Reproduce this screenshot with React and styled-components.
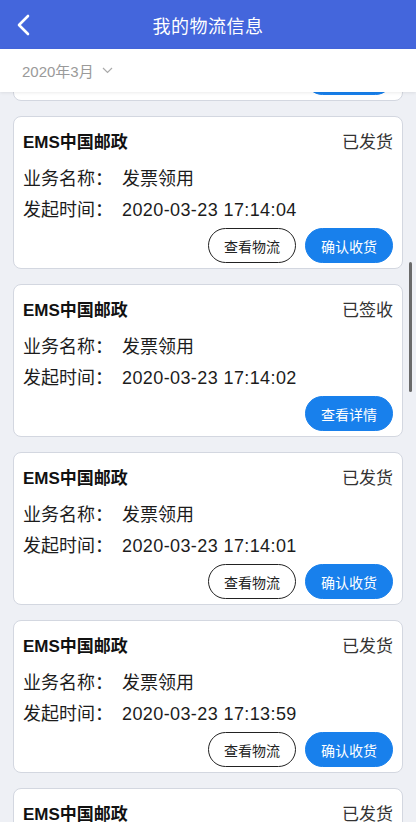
import React, {useLayoutEffect, useRef} from 'react'
import styled, {createGlobalStyle} from 'styled-components'

const GlobalStyle = createGlobalStyle`
    html, body {
        margin: 0;
        padding: 0;
        background: #eef0f5;
    }
    * {
        box-sizing: border-box;
    }
`

const Page = styled.main`
    width: 416px;
    height: 822px;
    display: flex;
    flex-direction: column;
    background: #eef0f5;
    font-family: "Liberation Sans", "Noto Sans CJK SC", sans-serif;
    overflow: hidden;
`

const Header = styled.header`
    height: 49px;
    flex: none;
    background: #4466dc;
    display: flex;
    align-items: center;
    justify-content: center;
    position: relative;
    color: #fff;
    font-size: 18px;
    letter-spacing: 0.5px;
`

const BackButton = styled.button`
    position: absolute;
    left: 10px;
    top: 11px;
    width: 28px;
    height: 28px;
    padding: 0;
    border: 0;
    background: none;
    display: flex;
    align-items: center;
    justify-content: center;
`

const FilterBar = styled.div`
    height: 43px;
    flex: none;
    background: #fff;
    display: flex;
    align-items: center;
    padding: 0 22px 1px;
    color: #9a9a9a;
    font-size: 15px;
    gap: 8px;
    box-shadow: 0 1px 3px rgba(0, 0, 0, 0.08);
    position: relative;
    z-index: 1;
`

const ListWrap = styled.div`
    flex: 1;
    position: relative;
    min-height: 0;
`

const List = styled.div`
    height: 100%;
    overflow-y: auto;
    padding: 15px 13px;
    display: flex;
    flex-direction: column;
    gap: 15px;
    scrollbar-width: none;
    &::-webkit-scrollbar {
        display: none;
    }
`

const ScrollThumb = styled.div`
    position: absolute;
    right: 4px;
    top: 170px;
    width: 3px;
    height: 130px;
    border-radius: 2px;
    background: #6a6a6a;
`

const Card = styled.section`
    flex: none;
    background: #fff;
    border: 1px solid #d3d7e0;
    border-radius: 8px;
    padding: 11px 9px 5px;
    display: flex;
    flex-direction: column;
`

const CardHead = styled.div`
    height: 24px;
    display: flex;
    align-items: center;
    justify-content: space-between;
    margin-bottom: 10px;
`

const Company = styled.div`
    font-size: 17px;
    font-weight: 700;
    color: #111;
`

const Status = styled.div`
    font-size: 17px;
    color: #333;
`

const Row = styled.div`
    height: 31px;
    padding-top: 2px;
    line-height: 31px;
    font-size: 18px;
    color: #1c1c1c;
    white-space: nowrap;
`

const Label = styled.span`
    display: inline-block;
    width: 99px;
`

const Value = styled.span`
    letter-spacing: ${p => (p.numeric ? '0.4px' : '0')};
`

const Actions = styled.div`
    margin-top: 4px;
    display: flex;
    justify-content: flex-end;
    gap: 9px;
`

const Button = styled.button`
    height: 35px;
    width: 88px;
    border-radius: 18px;
    font-family: inherit;
    font-size: 14px;
    padding: 0;
    cursor: pointer;
    border: 1px solid ${p => (p.primary ? '#1880ec' : '#222')};
    background: ${p => (p.primary ? '#1880ec' : '#fff')};
    color: ${p => (p.primary ? '#fff' : '#222')};
`

const orders = [
    {status: '已签收', time: '2020-03-23 17:14:06'},
    {status: '已发货', time: '2020-03-23 17:14:04'},
    {status: '已签收', time: '2020-03-23 17:14:02'},
    {status: '已发货', time: '2020-03-23 17:14:01'},
    {status: '已发货', time: '2020-03-23 17:13:59'},
    {status: '已发货', time: '2020-03-23 17:13:57'},
]

const OrderCard = ({status, time}) => (
    <Card>
        <CardHead>
            <Company>EMS中国邮政</Company>
            <Status>{status}</Status>
        </CardHead>
        <Row><Label>业务名称：</Label><Value>发票领用</Value></Row>
        <Row><Label>发起时间：</Label><Value numeric>{time}</Value></Row>
        <Actions>
            {status === '已签收' ? (
                <Button primary>查看详情</Button>
            ) : (
                <>
                    <Button>查看物流</Button>
                    <Button primary>确认收货</Button>
                </>
            )}
        </Actions>
    </Card>
)

const App = () => {
    const listRef = useRef(null)

    // the screen shows the list already scrolled a bit
    useLayoutEffect(() => {
        if (listRef.current) listRef.current.scrollTop = 159
    }, [])

    return (
        <Page>
            <GlobalStyle />
            <Header>
                <BackButton aria-label="返回">
                    <svg width="16" height="22" viewBox="0 0 16 22" fill="none">
                        <path d="M12 2L3 11l9 9" stroke="#fff" strokeWidth="2.6" strokeLinecap="round" strokeLinejoin="round" />
                    </svg>
                </BackButton>
                我的物流信息
            </Header>
            <FilterBar>
                2020年3月
                <svg width="11" height="7" viewBox="0 0 11 7" fill="none">
                    <path d="M1 1l4.5 4.5L10 1" stroke="#aaa" strokeWidth="1.2" />
                </svg>
            </FilterBar>
            <ListWrap>
                <List ref={listRef}>
                    {orders.map((o, i) => (
                        <OrderCard key={i} status={o.status} time={o.time} />
                    ))}
                </List>
                <ScrollThumb />
            </ListWrap>
        </Page>
    )
}

export default App
